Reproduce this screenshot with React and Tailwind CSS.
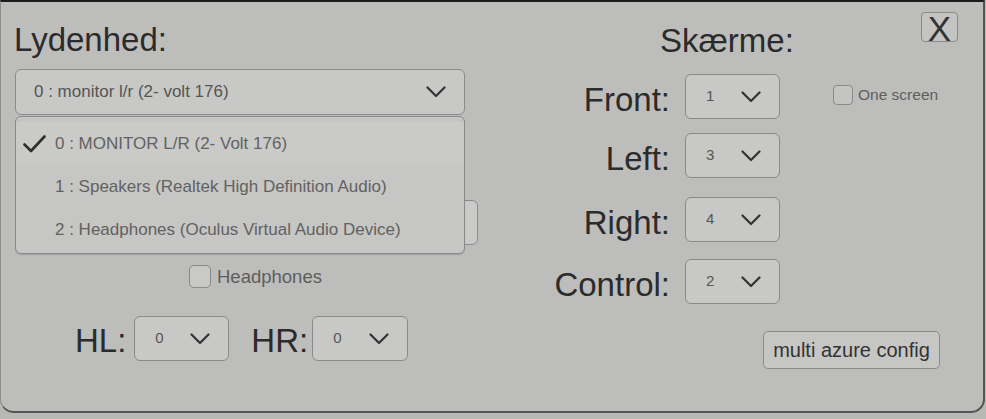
import { useState } from "react";

function Chevron() {
  return (
    <svg width="20" height="12" viewBox="0 0 20 12" fill="none">
      <path d="M1.5 1.5 L10 10 L18.5 1.5" stroke="#333" strokeWidth="2.2" strokeLinecap="round" strokeLinejoin="round" />
    </svg>
  );
}

function Check() {
  return (
    <svg width="23" height="18" viewBox="0 0 23 18" fill="none">
      <path d="M1.5 9.5 L8 16 L21.5 1.5" stroke="#2f2f2f" strokeWidth="2.6" strokeLinecap="round" strokeLinejoin="round" />
    </svg>
  );
}

function NumberSelect({ value, className = "" }) {
  return (
    <div className={"h-[45px] w-[95px] flex items-center justify-between pl-[20px] pr-[18px] bg-[#c8c8c6] border border-[#8a8a8a] rounded-[6px] " + className}>
      <span className="text-[15px] text-[#555]">{value}</span>
      <Chevron />
    </div>
  );
}

function ScreenRow({ label, value, className = "", children }) {
  return (
    <div className={"flex items-center " + className}>
      <div className="w-[130px] text-right text-[33px] leading-none text-[#2b2b2b] pt-[6px]">{label}</div>
      <NumberSelect value={value} className="ml-[15px]" />
      {children}
    </div>
  );
}

const devices = [
  "0 : MONITOR L/R (2- Volt 176)",
  "1 : Speakers (Realtek High Definition Audio)",
  "2 : Headphones (Oculus Virtual Audio Device)"
];

export default function App() {
  const [selected] = useState(0);

  return (
    <div className="w-[986px] h-[419px] bg-[#b8b8b7] overflow-hidden font-['Liberation_Sans',Arial,sans-serif]">
      <div className="relative w-[985px] h-[413px] bg-[#bdbdbc] border-t-2 border-t-[#1c1c1c] border-l border-l-[#8e8e8e] border-r-2 border-r-[#555] border-b-2 border-b-[#555] rounded-b-[14px] flex">
        {/* Close button */}
        <button className="absolute top-[10px] right-[25px] w-[37px] h-[30px] bg-[#c4c4c3] border border-[#8a8a8a] rounded-[4px] flex items-center justify-center text-[35px] leading-none text-[#333] font-light">
          <span className="mt-[2px]">X</span>
        </button>

        {/* Lydenhed column */}
        <div className="ml-[13px] w-[464px] flex flex-col">
          <div className="mt-[21px] h-[33px] text-[33px] leading-none text-[#2b2b2b]">Lydenhed:</div>

          <div className="relative mt-[13px] ml-[1px] w-[450px]">
            <div className="h-[46px] flex items-center justify-between pl-[18px] pr-[18px] bg-[#c8c8c6] border border-[#8a8a8a] rounded-[6px]">
              <span className="text-[17px] text-[#555]">0 : monitor l/r (2- volt 176)</span>
              <Chevron />
            </div>

            {/* open dropdown list */}
            <div className="absolute z-10 left-0 top-[47px] w-[450px] h-[138px] pt-[5px] bg-[#c6c6c4] border border-[#8a8a8a] rounded-[6px] shadow-[0_1px_1px_rgba(0,0,0,0.15)]">
              {devices.map((d, i) => (
                <div
                  key={d}
                  className={"h-[43px] flex items-center pl-[7px] " + (i === selected ? "bg-[#cacac8]" : "")}
                >
                  <div className="w-[32px] flex items-center">{i === selected && <Check />}</div>
                  <span className="text-[17px] text-[#626262]">{d}</span>
                </div>
              ))}
            </div>
          </div>

          {/* dropdown hidden behind the list */}
          <div className="mt-[85px] ml-[1px] h-[45px] w-[463px] bg-[#cacac8] border border-[#8a8a8a] rounded-[6px]" />

          <label className="mt-[20px] ml-[175px] flex items-center gap-[6px] h-[23px]">
            <span className="w-[22px] h-[23px] bg-[#c9c9c7] border border-[#8a8a8a] rounded-[5px]" />
            <span className="text-[18.5px] text-[#5e5e5e]">Headphones</span>
          </label>

          <div className="mt-[28px] ml-[61px] flex items-center">
            <span className="text-[33px] leading-none text-[#2b2b2b] pt-[3px]">HL:</span>
            <NumberSelect value="0" className="ml-[8px] bg-[#c2c2c0]" />
            <span className="ml-[22px] text-[33px] leading-none text-[#2b2b2b] pt-[3px]">HR:</span>
            <NumberSelect value="0" className="ml-[4px] w-[96px] bg-[#c2c2c0]" />
          </div>
        </div>

        {/* Skærme column */}
        <div className="ml-[62px] flex flex-col">
          <div className="mt-[22px] ml-[120px] h-[33px] text-[33px] leading-none text-[#2b2b2b]">Skærme:</div>

          <ScreenRow label="Front:" value="1" className="mt-[17px]">
            <label className="self-start mt-[9px] ml-[53px] flex items-center gap-[5px]">
              <span className="w-[20px] h-[20px] bg-[#c4c4c2] border border-[#8a8a8a] rounded-[4px]" />
              <span className="text-[15.5px] text-[#5e5e5e]">One screen</span>
            </label>
          </ScreenRow>
          <ScreenRow label="Left:" value="3" className="mt-[14px]" />
          <ScreenRow label="Right:" value="4" className="mt-[19px]" />
          <ScreenRow label="Control:" value="2" className="mt-[17px]" />

          <button className="mt-[27px] ml-[223px] w-[177px] h-[38px] bg-[#c6c6c4] border border-[#8a8a8a] rounded-[5px] text-[20px] text-[#333] flex items-center justify-center">
            multi azure config
          </button>
        </div>
      </div>
    </div>
  );
}
